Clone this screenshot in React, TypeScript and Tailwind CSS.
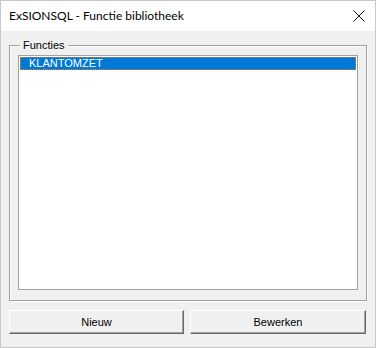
export default function App() {
  return (
    <div
      className="w-[376px] h-[348px] border border-[#c8c8c8] bg-[#f0f0f0] flex flex-col overflow-hidden"
      style={{ fontFamily: '"Liberation Sans", Arial, sans-serif' }}
    >
      {/* Title bar */}
      <div className="h-[30px] bg-white flex items-center justify-between pl-[8px] pr-[8px] shrink-0">
        <span
          className="text-[12px] text-black leading-none"
          style={{ fontFamily: 'Lato, "Noto Sans", sans-serif' }}
        >
          ExSIONSQL - Functie bibliotheek
        </span>
        <svg width="12" height="12" viewBox="0 0 12 12" className="mr-[2px]">
          <path d="M0.5 0.5 L11.5 11.5 M11.5 0.5 L0.5 11.5" stroke="#111" strokeWidth="1" />
        </svg>
      </div>

      {/* Body */}
      <div className="flex flex-col px-[8px] pt-[14px]">
        {/* Group box */}
        <div className="relative h-[256px] border border-[#a0a0a0] shadow-[inset_1px_1px_0_#fff,1px_1px_0_#fff] px-[8px] pt-[9px] pb-[10px]">
          <span className="absolute left-[10px] -top-[7px] bg-[#f0f0f0] px-[3px] text-[11px] leading-[13px] text-black">
            Functies
          </span>
          {/* List box */}
          <div className="h-full bg-white border border-[#a0a0a0] p-[1px]">
            <div className="h-[13px] bg-[#0078d7] outline outline-1 outline-dotted outline-[#e08020] -outline-offset-1 flex items-center pl-[9px]">
              <span className="text-[11px] leading-none text-white">KLANTOMZET</span>
            </div>
          </div>
        </div>

        {/* Buttons */}
        <div className="flex gap-[6px] mt-[9px]">
          <button className="w-[175px] h-[24px] bg-[#f0f0f0] border border-t-white border-l-white border-r-[#696969] border-b-[#696969] shadow-[inset_-1px_-1px_0_#a0a0a0] text-[11px] text-black">
            Nieuw
          </button>
          <button className="w-[176px] h-[24px] bg-[#f0f0f0] border border-t-white border-l-white border-r-[#696969] border-b-[#696969] shadow-[inset_-1px_-1px_0_#a0a0a0] text-[11px] text-black">
            Bewerken
          </button>
        </div>
      </div>
    </div>
  );
}
